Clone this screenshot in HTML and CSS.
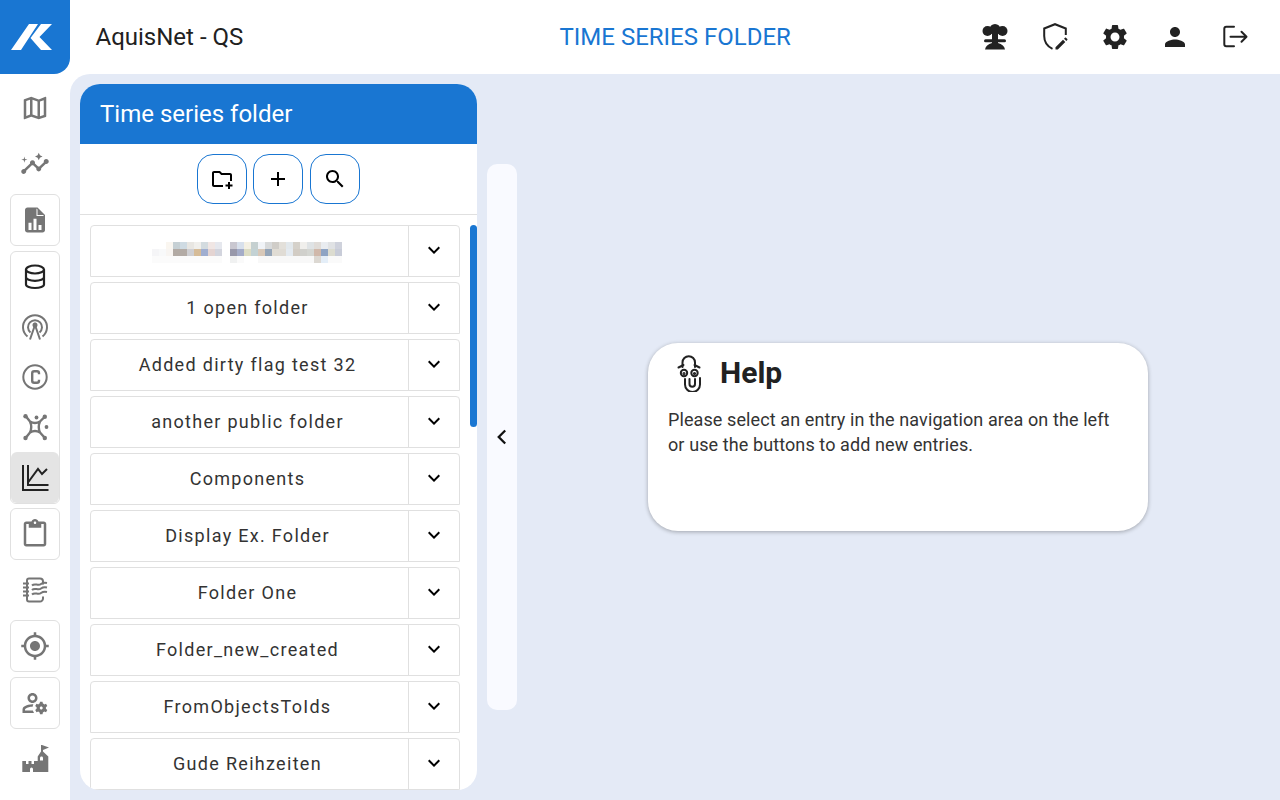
FILE: index.html
```html
<!DOCTYPE html>
<html lang="en">
<head>
<meta charset="utf-8">
<title>AquisNet - QS</title>
<link rel="stylesheet" href="styles.css">
</head>
<body>
<header class="topbar">
  <a class="logo">
    <svg width="70" height="74" viewBox="0 0 70 74"><path fill="#fff" d="M11 50L29 24H38L21 50ZM41 24H52L39.500 37L52 50H41L30.500 38Z"/></svg>
  </a>
  <div class="app-name">AquisNet - QS</div>
  <div class="page-title">TIME SERIES FOLDER</div>
  <div class="top-actions">
    <button class="top-btn"><svg class="i30" viewBox="0 0 30 30" fill="#222"><circle cx="7.500" cy="9" r="5"/><circle cx="15" cy="7.500" r="5.500"/><circle cx="22.500" cy="9" r="5"/><rect x="12" y="11" width="6" height="11"/><rect x="4" y="17.300" width="22" height="3" rx="1.500"/><path d="M5 27.500c.5-3 3-5.500 7-6.500h6c4 1 6.500 3.500 7 6.500z"/></svg></button>
    <button class="top-btn"><svg class="i30" viewBox="0 0 30 30"><path fill="none" stroke="#222" stroke-width="2" d="M12.500 26.800C7.500 24.500 4.200 20 4.200 14V6.500L15 2.200l10.800 4.300V13"/><path fill="#222" d="M15.500 27.500v-2.300l7.500-7.500 2.300 2.300-7.500 7.500zM24 16.700l1-1c.3-.3.700-.3 1 0l1.300 1.300c.3.300.3.700 0 1l-1 1z"/></svg></button>
    <button class="top-btn"><svg class="i30" viewBox="0 0 24 24"><path fill="#222" d="M19.140 12.940c.04-.3.060-.61.060-.94 0-.32-.02-.64-.07-.94l2.030-1.580c.18-.14.23-.41.120-.61l-1.920-3.320c-.12-.22-.37-.29-.59-.22l-2.390.96c-.5-.38-1.030-.7-1.620-.94l-.36-2.540c-.04-.24-.24-.41-.48-.41h-3.840c-.24 0-.43.170-.47.410l-.36 2.540c-.59.240-1.130.570-1.620.94l-2.390-.96c-.22-.08-.47 0-.59.220L2.740 8.870c-.12.210-.08.470.12.610l2.030 1.580c-.05.3-.09.630-.09.940s.02.640.07.940l-2.030 1.580c-.18.140-.23.410-.12.610l1.920 3.320c.12.220.37.290.59.220l2.390-.96c.5.380 1.030.7 1.620.94l.36 2.540c.05.240.24.410.48.410h3.840c.24 0 .44-.17.47-.41l.36-2.540c.59-.24 1.130-.56 1.620-.94l2.390.96c.22.080.47 0 .59-.22l1.920-3.320c.12-.22.070-.47-.12-.61l-2.010-1.580zM12 15.600c-1.980 0-3.600-1.620-3.600-3.600s1.620-3.600 3.600-3.600 3.600 1.620 3.600 3.600-1.620 3.600-3.600 3.600z"/></svg></button>
    <button class="top-btn"><svg class="i30" viewBox="0 0 24 24"><path fill="#222" d="M12 12c2.210 0 4-1.790 4-4s-1.790-4-4-4-4 1.790-4 4 1.790 4 4 4zm0 2c-2.670 0-8 1.340-8 4v2h16v-2c0-2.660-5.330-4-8-4z"/></svg></button>
    <button class="top-btn"><svg class="i30" viewBox="0 0 30 30"><path fill="none" stroke="#222" stroke-width="2" stroke-linecap="round" stroke-linejoin="round" d="M14 4.700H6.300a2 2 0 0 0-2 2v15.600a2 2 0 0 0 2 2H14M10.500 14.700h15.500M21.500 9.700l5 5-5 5"/></svg></button>
  </div>
</header>
<div class="shell">
  <nav class="sidenav">
    <a class="nav-item"><svg class="i30 muted" viewBox="0 0 24 24"><path d="M20.500 3l-.16.03L15 5.100 9 3 3.360 4.900c-.21.070-.36.250-.36.480V20.500c0 .28.220.5.5.5l.16-.03L9 18.900l6 2.100 5.640-1.900c.21-.07.36-.25.36-.48V3.500c0-.28-.22-.5-.5-.5zM10 5.470l4 1.400v11.660l-4-1.400V5.470zm-5 .99l3-1.010v11.700l-3 1.160V6.460zm14 11.080l-3 1.010V6.860l3-1.160v11.840z"/></svg></a>
    <a class="nav-item"><svg class="i30 muted" viewBox="0 0 24 24"><path d="M21 8c-1.450 0-2.260 1.440-1.930 2.510l-3.550 3.560c-.3-.09-.74-.09-1.040 0l-2.550-2.550C12.270 10.450 11.460 9 10 9c-1.450 0-2.270 1.440-1.930 2.520l-4.560 4.550C2.440 15.740 1 16.550 1 18c0 1.100.9 2 2 2 1.450 0 2.260-1.440 1.930-2.510l4.550-4.560c.3.090.74.090 1.040 0l2.550 2.550C12.730 16.550 13.540 18 15 18c1.450 0 2.270-1.440 1.930-2.520l3.560-3.550c1.070.33 2.510-.48 2.510-1.930 0-1.100-.9-2-2-2z"/><path d="M15 9l.94-2.070L18 6l-2.060-.93L15 3l-.92 2.070L12 6l2.080.93zM3.500 11L4 9l2-.5L4 8l-.5-2L3 8l-2 .5L3 9z"/></svg></a>
    <a class="nav-item boxed"><svg class="i30 muted" viewBox="0 0 24 24"><path d="M14 2H6c-1.100 0-2 .9-2 2v16c0 1.100.9 2 2 2h12c1.100 0 2-.9 2-2V8l-6-6z"/><path fill="#fff" d="M13.200 2.800V8.800H19.200L18.400 8H14V3.600zM6.800 14.200h2.400V20H6.800zM10.800 11h2.400v9h-2.400zM14.800 16h2.400v4h-2.400z"/></svg></a>
    <div class="nav-group">
      <a class="nav-item sub"><svg class="i30" viewBox="0 0 30 30" fill="none" stroke="#222" stroke-width="2.200"><ellipse cx="15" cy="7.500" rx="9" ry="4"/><path d="M6 7.500v15c0 2 4 3.500 9 3.500s9-1.500 9-3.500v-15M6 15c0 2.200 4 3.800 9 3.800s9-1.600 9-3.800"/></svg></a>
      <a class="nav-item sub"><svg class="i30" viewBox="0 0 30 30" fill="none" stroke="#757575" stroke-width="2"><path d="M7.500 24.500a12 12 0 1 1 15 0M10.500 20.500a7 7 0 1 1 9 0"/><path d="M10 27.500L15 13l5 14.500"/><circle cx="15" cy="13" r="1.500" fill="#757575"/></svg></a>
      <a class="nav-item sub"><svg class="i30" viewBox="0 0 30 30" fill="none" stroke="#757575" stroke-width="2"><circle cx="15" cy="15" r="11.700"/><path stroke-width="2.400" d="M19 12.200v-1a2 2 0 0 0-2-2h-2.800a2 2 0 0 0-2 2v7.600a2 2 0 0 0 2 2H17a2 2 0 0 0 2-2v-1"/></svg></a>
      <a class="nav-item sub"><svg class="i30" viewBox="0 0 30 30" fill="none" stroke="#757575" stroke-width="2.400" stroke-linejoin="round"><path d="M6 4.500L10 9.500M24.500 5L20 9.500M6 25.500L10 20.500M24.500 25.500L20 20.500M10 9.500c3 1.800 7 1.800 10 0 -1.500 3.300-1.500 7.700 0 11-3-1.800-7-1.800-10 0 1.500-3.300 1.500-7.700 0-11z"/><g fill="#757575" stroke="none"><circle cx="5.500" cy="4.200" r="2.200"/><circle cx="24.800" cy="4.800" r="2.200"/><circle cx="5.500" cy="26" r="2.200"/><circle cx="24.800" cy="26" r="2.200"/><circle cx="16.500" cy="5.500" r="1.900"/><circle cx="26.500" cy="15" r="1.900"/></g></svg></a>
      <a class="nav-item sub active"><svg class="i30" viewBox="0 0 30 30" fill="none" stroke="#222" stroke-width="2"><path d="M3 2v25h25.500M8 2v20h20.500"/><path d="M8 19.500L18 6l4 5 5-5"/></svg></a>
    </div>
    <a class="nav-item boxed"><svg class="i30 muted" viewBox="0 0 24 24"><path d="M19 2h-4.180C14.400.84 13.300 0 12 0c-1.300 0-2.400.84-2.820 2H5c-1.100 0-2 .9-2 2v16c0 1.100.9 2 2 2h14c1.100 0 2-.9 2-2V4c0-1.100-.9-2-2-2zm-7 0c.55 0 1 .45 1 1s-.45 1-1 1-1-.45-1-1 .45-1 1-1zm7 18H5V4h2v3h10V4h2v16z"/></svg></a>
    <a class="nav-item"><svg class="i30" viewBox="0 0 30 30" fill="none" stroke="#757575" stroke-width="2"><path d="M7 5.500a2 2 0 0 1 2-2h11a3 3 0 0 1 3 3v3M7 5.500v19a2 2 0 0 0 2 2h11a3 3 0 0 0 3-3v-2M3 8.500h6M3 12.500h6M3 16.500h6M3 20.500h6"/><path d="M12 10.500c3-3 6 1 9-1.500 2-1.500 4-1.500 6-1M12 15c3-3 6 1 9-1.500 2-1.500 4-1.500 6-1M12 19.500c3-3 6 1 9-1.500 2-1.500 4-1.500 6-1"/></svg></a>
    <a class="nav-item boxed"><svg class="i30 muted" viewBox="0 0 24 24"><path d="M12 8c-2.210 0-4 1.790-4 4s1.790 4 4 4 4-1.790 4-4-1.790-4-4-4zm8.940 3c-.46-4.170-3.770-7.480-7.940-7.940V1h-2v2.060C6.830 3.520 3.520 6.830 3.060 11H1v2h2.060c.46 4.170 3.770 7.480 7.940 7.940V23h2v-2.060c4.170-.46 7.480-3.770 7.940-7.940H23v-2h-2.060zM12 19c-3.870 0-7-3.130-7-7s3.130-7 7-7 7 3.130 7 7-3.130 7-7 7z"/></svg></a>
    <a class="nav-item boxed nudge"><svg class="i30 muted" viewBox="0 0 24 24"><path d="M4 18v-.65c0-.34.160-.66.410-.81C6.100 15.530 8.030 15 10 15c.03 0 .05 0 .08.010.1-.7.3-1.370.59-1.980-.22-.02-.44-.03-.67-.03-2.420 0-4.680.67-6.610 1.820-.88.520-1.390 1.500-1.390 2.530V20h9.260c-.42-.6-.75-1.280-.97-2H4zM10 12c2.210 0 4-1.790 4-4s-1.790-4-4-4-4 1.790-4 4 1.790 4 4 4zm0-6c1.100 0 2 .9 2 2s-.9 2-2 2-2-.9-2-2 .9-2 2-2z"/><path d="M20.750 16c0-.22-.03-.42-.06-.63l1.140-1.010-1-1.730-1.450.49c-.32-.27-.68-.48-1.080-.63L18 11h-2l-.3 1.490c-.4.150-.76.360-1.080.63l-1.450-.49-1 1.730 1.140 1.010c-.03.210-.06.410-.06.630s.03.420.06.630l-1.140 1.010 1 1.730 1.450-.49c.32.270.68.480 1.080.63L16 21h2l.3-1.490c.4-.15.76-.36 1.080-.63l1.450.49 1-1.730-1.140-1.010c.03-.21.06-.41.06-.63zM17 17.200c-.66 0-1.200-.54-1.200-1.200s.54-1.200 1.200-1.200 1.200.54 1.200 1.200-.54 1.200-1.200 1.200z"/></svg></a>
    <a class="nav-item"><svg class="i30 muted" viewBox="0 0 30 30"><path d="M22 1l7 2.500-6 2.500v1.500l5.300 5V28H2.300V17H6v3h2.500v-3h3v3H14v-3h3.700v-4.500l3.300-5V1zM21.500 12.500c-1 0-1.500.7-1.500 1.500v2.500h3V14c0-.8-.5-1.500-1.500-1.500zM10 28v-3a1.500 1.500 0 0 1 3 0v3z" fill-rule="evenodd"/></svg></a>
  </nav>
  <main class="content">
    <section class="panel">
      <h2 class="panel-title">Time series folder</h2>
      <div class="toolbar">
        <button class="tool-btn"><svg class="i24" viewBox="0 0 24 24"><path d="M20 6h-8l-2-2H4c-1.110 0-1.990.89-1.990 2L2 18c0 1.110.89 2 2 2h9v-2H4V6h5.170l2 2H20v6h2V8c0-1.110-.89-2-2-2z"/><path d="M18 15h2v2.500h2.500v2H20V22h-2v-2.500h-2.500v-2H18z"/></svg></button>
        <button class="tool-btn"><svg class="i24" viewBox="0 0 24 24"><path d="M19 13h-6v6h-2v-6H5v-2h6V5h2v6h6v2z"/></svg></button>
        <button class="tool-btn tool-last"><svg class="i24" viewBox="0 0 24 24"><path d="M15.500 14h-.79l-.28-.27C15.410 12.590 16 11.110 16 9.500 16 5.910 13.090 3 9.500 3S3 5.910 3 9.500 5.910 16 9.500 16c1.610 0 3.090-.59 4.230-1.570l.27.28v.79l5 4.990L20.490 19l-4.990-5zm-6 0C7.010 14 5 11.990 5 9.500S7.010 5 9.500 5 14 7.010 14 9.500 11.990 14 9.500 14z"/></svg></button>
      </div>
      <div class="folder-list">
        <div class="scroll-thumb"></div>
        <div class="folder">
          <div class="folder-name">
            <svg class="blurred" width="191" height="21" viewBox="0 0 191 21" shape-rendering="crispEdges">
              <g transform="translate(-152 0)">
                <rect x="166" y="0" width="7" height="7" fill="#faf6f0"/><rect x="173" y="0" width="7" height="7" fill="#c6d0d4"/><rect x="180" y="0" width="7" height="7" fill="#cfdbe3"/><rect x="187" y="0" width="7" height="7" fill="#e8e6e2"/><rect x="194" y="0" width="7" height="7" fill="#f0efec"/><rect x="201" y="0" width="7" height="7" fill="#d3dbdf"/><rect x="208" y="0" width="7" height="7" fill="#f0e6e4"/><rect x="215" y="0" width="7" height="7" fill="#e6e8ee"/>
                <rect x="230" y="0" width="7" height="7" fill="#c9c7d0"/><rect x="237" y="0" width="7" height="7" fill="#d8e0ec"/><rect x="244" y="0" width="7" height="7" fill="#f4f0e4"/><rect x="251" y="0" width="7" height="7" fill="#c5d0d0"/><rect x="258" y="0" width="7" height="7" fill="#f0f3f7"/><rect x="265" y="0" width="7" height="7" fill="#d8dadb"/><rect x="272" y="0" width="7" height="7" fill="#d0cdc8"/><rect x="279" y="0" width="7" height="7" fill="#e3e0da"/><rect x="286" y="0" width="7" height="7" fill="#e2e8ec"/><rect x="293" y="0" width="7" height="7" fill="#d5d1ca"/><rect x="300" y="0" width="7" height="7" fill="#f0efec"/><rect x="307" y="0" width="7" height="7" fill="#dfe3e5"/><rect x="314" y="0" width="7" height="7" fill="#e0dcd8"/><rect x="321" y="0" width="7" height="7" fill="#e9ecf0"/><rect x="328" y="0" width="7" height="7" fill="#e0e2e4"/><rect x="335" y="0" width="7" height="7" fill="#cfd2dc"/>
                <rect x="152" y="7" width="7" height="7" fill="#f5f5f7"/><rect x="159" y="7" width="7" height="7" fill="#f8f9fa"/><rect x="166" y="7" width="7" height="7" fill="#f8f5f2"/><rect x="173" y="7" width="7" height="7" fill="#b2aaa4"/><rect x="180" y="7" width="7" height="7" fill="#b3aba5"/><rect x="187" y="7" width="7" height="7" fill="#cfcfd3"/><rect x="194" y="7" width="7" height="7" fill="#d6bc98"/><rect x="201" y="7" width="7" height="7" fill="#a0aed0"/><rect x="208" y="7" width="7" height="7" fill="#e4d4d2"/><rect x="215" y="7" width="7" height="7" fill="#d3d5de"/>
                <rect x="230" y="7" width="7" height="7" fill="#9898aa"/><rect x="237" y="7" width="7" height="7" fill="#a4acc8"/><rect x="244" y="7" width="7" height="7" fill="#dcdcc4"/><rect x="251" y="7" width="7" height="7" fill="#c3d2d4"/><rect x="258" y="7" width="7" height="7" fill="#d8c8b8"/><rect x="265" y="7" width="7" height="7" fill="#95a5b8"/><rect x="272" y="7" width="7" height="7" fill="#e0dcd4"/><rect x="279" y="7" width="7" height="7" fill="#e0dcd5"/><rect x="286" y="7" width="7" height="7" fill="#e4eaf0"/><rect x="293" y="7" width="7" height="7" fill="#d2ccc4"/><rect x="300" y="7" width="7" height="7" fill="#d0d0cc"/><rect x="307" y="7" width="7" height="7" fill="#d4d6d2"/><rect x="314" y="7" width="7" height="7" fill="#d0b8aa"/><rect x="321" y="7" width="7" height="7" fill="#8ea4c4"/><rect x="328" y="7" width="7" height="7" fill="#dcdcd0"/><rect x="335" y="7" width="7" height="7" fill="#c8ccd8"/>
                <rect x="152" y="14" width="70" height="7" fill="#fbfbfb"/><rect x="230" y="14" width="7" height="7" fill="#f0f1f1"/><rect x="237" y="14" width="7" height="7" fill="#fafafa"/><rect x="258" y="14" width="56" height="7" fill="#f8f8f8"/><rect x="314" y="14" width="7" height="7" fill="#dcd8d2"/><rect x="321" y="14" width="7" height="7" fill="#e4eef8"/><rect x="328" y="14" width="14" height="7" fill="#fafafa"/>
              </g>
            </svg>
          </div>
          <button class="folder-toggle"><svg class="i24" viewBox="0 0 24 24"><path d="M16.590 8.590L12 13.170 7.410 8.590 6 10l6 6 6-6z"/></svg></button>
        </div>
        <div class="folder"><div class="folder-name">1 open folder</div><button class="folder-toggle"><svg class="i24" viewBox="0 0 24 24"><path d="M16.590 8.590L12 13.170 7.410 8.590 6 10l6 6 6-6z"/></svg></button></div>
        <div class="folder"><div class="folder-name">Added dirty flag test 32</div><button class="folder-toggle"><svg class="i24" viewBox="0 0 24 24"><path d="M16.590 8.590L12 13.170 7.410 8.590 6 10l6 6 6-6z"/></svg></button></div>
        <div class="folder"><div class="folder-name">another public folder</div><button class="folder-toggle"><svg class="i24" viewBox="0 0 24 24"><path d="M16.590 8.590L12 13.170 7.410 8.590 6 10l6 6 6-6z"/></svg></button></div>
        <div class="folder"><div class="folder-name">Components</div><button class="folder-toggle"><svg class="i24" viewBox="0 0 24 24"><path d="M16.590 8.590L12 13.170 7.410 8.590 6 10l6 6 6-6z"/></svg></button></div>
        <div class="folder"><div class="folder-name">Display Ex. Folder</div><button class="folder-toggle"><svg class="i24" viewBox="0 0 24 24"><path d="M16.590 8.590L12 13.170 7.410 8.590 6 10l6 6 6-6z"/></svg></button></div>
        <div class="folder"><div class="folder-name">Folder One</div><button class="folder-toggle"><svg class="i24" viewBox="0 0 24 24"><path d="M16.590 8.590L12 13.170 7.410 8.590 6 10l6 6 6-6z"/></svg></button></div>
        <div class="folder"><div class="folder-name">Folder_new_created</div><button class="folder-toggle"><svg class="i24" viewBox="0 0 24 24"><path d="M16.590 8.590L12 13.170 7.410 8.590 6 10l6 6 6-6z"/></svg></button></div>
        <div class="folder"><div class="folder-name">FromObjectsToIds</div><button class="folder-toggle"><svg class="i24" viewBox="0 0 24 24"><path d="M16.590 8.590L12 13.170 7.410 8.590 6 10l6 6 6-6z"/></svg></button></div>
        <div class="folder"><div class="folder-name">Gude Reihzeiten</div><button class="folder-toggle"><svg class="i24" viewBox="0 0 24 24"><path d="M16.590 8.590L12 13.170 7.410 8.590 6 10l6 6 6-6z"/></svg></button></div>
      </div>
    </section>
    <button class="collapse-bar"><svg class="i30" viewBox="0 0 30 30"><path fill="#111" d="M19 9.300L17.400 7.700 10.100 15l7.300 7.300 1.600-1.600L13.300 15z"/></svg></button>
    <div class="stage">
      <article class="help-card">
        <div class="help-head">
          <svg class="clippy" width="36" height="38" viewBox="0 0 36 38" fill="none" stroke="#222" stroke-width="2" stroke-linecap="round"><path d="M11.500 13V8.500a6.250 6.250 0 0 1 12.500 0V13"/><path d="M14 25v5.500a7.500 7.500 0 0 0 15 0V24"/><path d="M18.500 25v5a2.750 2.750 0 0 0 5.500 0V25"/><path d="M7.500 13.500l5-2.500M28.500 13.500l-5-2.500"/><circle cx="13" cy="19" r="3.200"/><circle cx="23.500" cy="19" r="3.200"/><circle cx="13" cy="19.500" r=".6" fill="#222"/><circle cx="23.500" cy="19.500" r=".6" fill="#222"/></svg>
          <h3 class="help-title">Help</h3>
        </div>
        <p class="help-text">Please select an entry in the navigation area on the left or use the buttons to add new entries.</p>
      </article>
    </div>
  </main>
</div>
</body>
</html>
```
FILE: styles.css
```css
* { box-sizing: border-box; }
html, body { height: 100%; }
body {
  margin: 0;
  height: 800px;
  overflow: hidden;
  display: flex;
  flex-direction: column;
  background: #fff;
  color: #212121;
  font-family: Roboto, "Liberation Sans", sans-serif;
}
button { font: inherit; padding: 0; background: none; border: 0; display: flex; align-items: center; justify-content: center; }
svg { display: block; }
.i30 { width: 30px; height: 30px; }
.i24 { width: 24px; height: 24px; }
.muted { fill: #757575; }

.topbar { flex: 0 0 74px; display: flex; align-items: center; position: relative; }
.logo {
  flex: 0 0 70px; height: 74px;
  background: #1976d2;
  border-bottom-right-radius: 16px;
}
.app-name { margin-left: 25.5px; font-size: 24px; color: #212121; }
.page-title { position: absolute; left: 559.5px; top: 21px; font-size: 24px; color: #1976d2; line-height: 32px; }
.top-actions { margin-left: auto; margin-right: 30px; display: flex; gap: 30px; }
.top-btn { width: 30px; height: 30px; }

.shell { flex: 1; display: flex; min-height: 0; }
.sidenav { flex: 0 0 70px; padding: 8px 10px 0; display: flex; flex-direction: column; gap: 4px; }
.nav-item { flex: 0 0 52px; height: 52px; display: flex; align-items: center; justify-content: center; border-radius: 6px; }
.boxed { border: 1px solid #e0e0e0; }
.nudge { margin-top: 1px; }
.nav-group { margin-top: 1px; height: 253px; flex: 0 0 253px; border: 1px solid #e0e0e0; border-radius: 6px; display: flex; flex-direction: column; }
.nav-item.sub { flex: 0 0 50px; height: 50px; }
.nav-item.active { background: #e4e4e4; flex-basis: 51px; height: 51px; }

.content {
  flex: 1; display: flex; min-width: 0;
  background: #e4eaf6;
  border-top-left-radius: 20px;
  padding: 10px 0 10px 10px;
}
.panel {
  flex: 0 0 397px;
  background: #fff;
  border-radius: 20px;
  display: flex; flex-direction: column;
  overflow: hidden;
}
.panel-title {
  margin: 0; flex: 0 0 60px;
  background: #1976d2; color: #fff;
  font-size: 24px; font-weight: 400; line-height: 60px;
  padding-left: 20px;
}
.toolbar {
  flex: 0 0 71px;
  border-bottom: 1px solid #e0e0e0;
  display: flex; justify-content: center; gap: 6px;
  padding-top: 10px;
}
.tool-btn { width: 50px; height: 50px; border: 1px solid #1976d2; border-radius: 16px; color: #000; }
.tool-last { margin-left: 1px; }
.folder-list { flex: 1; min-height: 0; padding: 10px 17px 0 10px; display: flex; flex-direction: column; gap: 5px; overflow: hidden; position: relative; }
.scroll-thumb { position: absolute; right: 0; top: 10px; width: 7px; height: 202px; background: #1976d2; border-radius: 4px; }
.folder { flex: 0 0 52px; display: flex; border: 1px solid #e0e0e0; border-radius: 4px 4px 0 0; }
.folder-name { flex: 1; min-width: 0; display: flex; align-items: center; justify-content: center; padding: 0 4px 2px 0; font-size: 18px; letter-spacing: 1.3px; color: #333; }
.blurred { margin-top: 5px; }
.folder-toggle { flex: 0 0 51px; border-left: 1px solid #e0e0e0; padding-bottom: 2px; }

.collapse-bar { flex: 0 0 30px; margin: 80px 0 80px 10px; background: #f9faff; border-radius: 10px; }
.stage { flex: 1; display: flex; align-items: center; justify-content: center; padding-right: 1px; }
.help-card { width: 500px; height: 188px; background: #fff; border-radius: 30px; box-shadow: 0 1px 4px rgba(0,0,0,.3); padding: 8px 20px; }
.help-head { display: flex; align-items: center; height: 44px; gap: 13px; padding-left: 3px; margin-bottom: 12px; }
.help-title { margin: 0; font-size: 30px; font-weight: 700; line-height: 44px; }
.help-text { margin: 0; max-width: 450px; font-size: 18px; letter-spacing: .1px; line-height: 25px; color: #333; }
```
